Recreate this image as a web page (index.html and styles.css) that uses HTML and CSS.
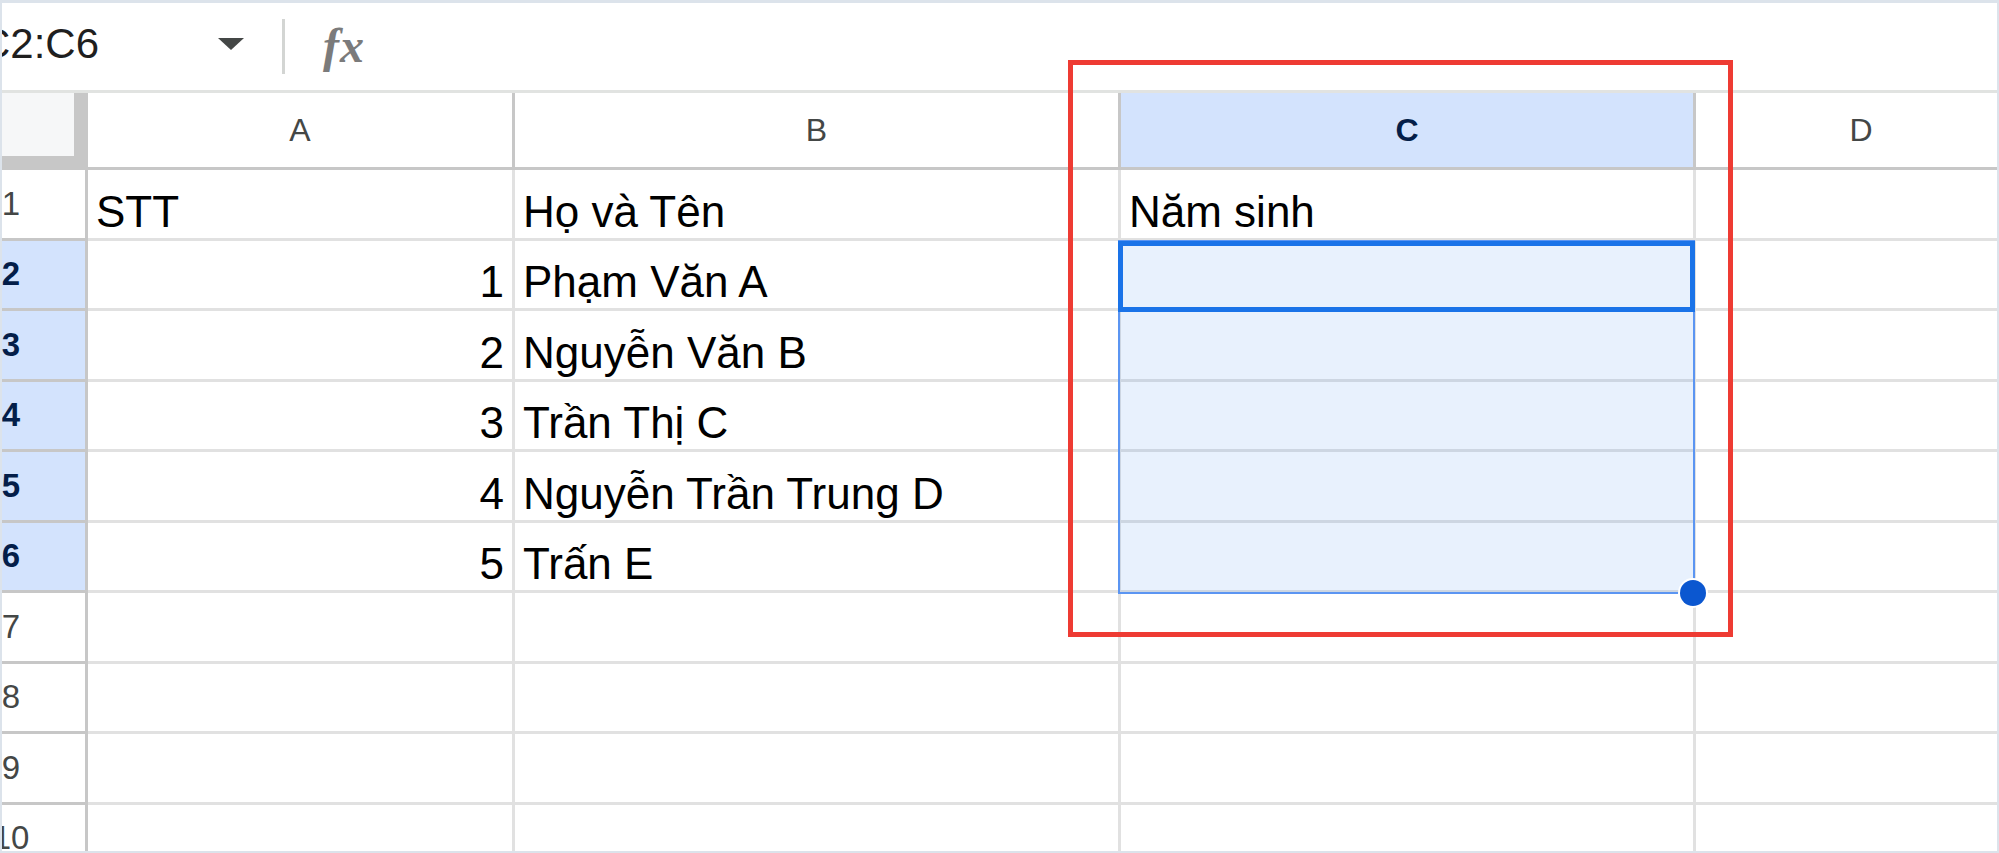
FILE: index.html
```html
<!DOCTYPE html>
<html lang="vi">
<head>
<meta charset="utf-8">
<title>Sheet</title>
<link rel="stylesheet" href="styles.css">
</head>
<body>
<div class="frame">
  <div class="toolbar">
    <span class="namebox">C2:C6</span>
    <span class="caret"></span>
    <span class="divider"></span>
    <span class="fx">fx</span>
  </div>
  <div class="sheet">
    <div class="corner"></div>
    <div class="hd">A</div>
    <div class="hd">B</div>
    <div class="hd sel">C</div>
    <div class="hd last">D</div>

    <div class="rh"><span>1</span></div>
    <div class="c">STT</div>
    <div class="c">Họ và Tên</div>
    <div class="c">Năm sinh</div>
    <div class="c last"></div>

    <div class="rh sel"><span>2</span></div>
    <div class="c num">1</div>
    <div class="c">Phạm Văn A</div>
    <div class="c"></div>
    <div class="c last"></div>

    <div class="rh sel"><span>3</span></div>
    <div class="c num">2</div>
    <div class="c">Nguyễn Văn B</div>
    <div class="c"></div>
    <div class="c last"></div>

    <div class="rh sel"><span>4</span></div>
    <div class="c num">3</div>
    <div class="c">Trần Thị C</div>
    <div class="c"></div>
    <div class="c last"></div>

    <div class="rh sel"><span>5</span></div>
    <div class="c num">4</div>
    <div class="c">Nguyễn Trần Trung D</div>
    <div class="c"></div>
    <div class="c last"></div>

    <div class="rh sel"><span>6</span></div>
    <div class="c num">5</div>
    <div class="c">Trấn E</div>
    <div class="c"></div>
    <div class="c last"></div>

    <div class="rh"><span>7</span></div>
    <div class="c"></div>
    <div class="c"></div>
    <div class="c"></div>
    <div class="c last"></div>

    <div class="rh"><span>8</span></div>
    <div class="c"></div>
    <div class="c"></div>
    <div class="c"></div>
    <div class="c last"></div>

    <div class="rh"><span>9</span></div>
    <div class="c"></div>
    <div class="c"></div>
    <div class="c"></div>
    <div class="c last"></div>

    <div class="rh"><span>10</span></div>
    <div class="c"></div>
    <div class="c"></div>
    <div class="c"></div>
    <div class="c last"></div>

    <div class="range"></div>
    <div class="active"></div>
    <div class="handle"></div>
  </div>
  <div class="annotation"></div>
</div>
</body>
</html>
```
FILE: styles.css
```css
* { box-sizing: border-box; }
html, body { margin: 0; padding: 0; }
body {
  width: 1999px;
  height: 853px;
  overflow: hidden;
  background: #ffffff;
  font-family: "Liberation Sans", Arial, sans-serif;
}
.frame {
  position: relative;
  height: 853px;
  border: solid #dce3eb;
  border-width: 3px 2px 2px 2px;
  overflow: hidden;
  background: #ffffff;
}

/* toolbar */
.toolbar {
  height: 90px;
  border-bottom: 3px solid #e1e3e1;
  display: flex;
  align-items: center;
}
.namebox {
  flex: none;
  width: 238px;
  margin-left: -22px;
  margin-bottom: 5px;
  font-size: 42px;
  line-height: 1;
  color: #1f1f1f;
  white-space: nowrap;
}
.caret {
  flex: none;
  width: 0;
  height: 0;
  border-left: 13.5px solid transparent;
  border-right: 13.5px solid transparent;
  border-top: 12px solid #444746;
  margin-bottom: 5px;
}
.divider {
  flex: none;
  width: 3px;
  height: 55px;
  margin-left: 38px;
  background: #d3d5d3;
}
.fx {
  flex: none;
  margin-left: 38px;
  font-family: "Liberation Serif", "Times New Roman", serif;
  font-style: italic;
  font-weight: bold;
  font-size: 48px;
  line-height: 1;
  letter-spacing: 1px;
  color: #7b7b7b;
  margin-bottom: 2px;
}

/* grid */
.sheet {
  position: relative;
  display: grid;
  grid-template-columns: 86px 427px 606px 575px 330px;
  grid-template-rows: 77px repeat(10, 70.5px);
}
.corner {
  background: #f6f7f8;
  border-right: 14px solid #c7c7c7;
  border-bottom: 14px solid #c7c7c7;
}
.hd {
  display: flex;
  align-items: center;
  justify-content: center;
  border-right: 3px solid #c7c7c7;
  border-bottom: 3px solid #c7c7c7;
  font-size: 32px;
  color: #444746;
  background: #ffffff;
}
.rh {
  display: flex;
  align-items: center;
  border-right: 3px solid #c7c7c7;
  border-bottom: 3px solid #c7c7c7;
  font-size: 33px;
  color: #444746;
  background: #ffffff;
}
.rh span {
  display: flex;
  justify-content: center;
  width: 18px;
  white-space: nowrap;
}
.sel {
  background: #d3e3fd;
  color: #041e49;
  font-weight: bold;
}
.c {
  display: flex;
  align-items: flex-end;
  padding: 0 8px 1px 8px;
  border-right: 3px solid #e1e1e1;
  border-bottom: 3px solid #e1e1e1;
  font-size: 44px;
  color: #000000;
  white-space: nowrap;
}
.num { justify-content: flex-end; }
.last { border-right: none; }

/* selection overlays */
.range {
  position: absolute;
  left: 1116px;
  top: 147px;
  width: 577px;
  height: 354px;
  border: 2px solid #5b95f2;
  background: rgba(26, 115, 232, 0.1);
}
.active {
  position: absolute;
  left: 1116px;
  top: 148px;
  width: 577px;
  height: 71px;
  border: 5px solid #1a73e8;
}
.handle {
  position: absolute;
  left: 1678px;
  top: 487px;
  width: 26px;
  height: 26px;
  border-radius: 50%;
  background: #0b57d0;
  box-shadow: 0 0 0 2px #ffffff;
}

/* red annotation box */
.annotation {
  position: absolute;
  left: 1066px;
  top: 57px;
  width: 665px;
  height: 577px;
  border: 5px solid #ee3b33;
}
```
